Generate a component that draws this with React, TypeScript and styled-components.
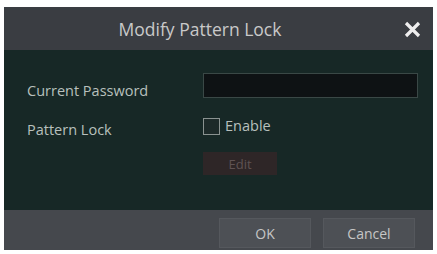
import React from "react";
import styled, { createGlobalStyle } from "styled-components";

const GlobalStyle = createGlobalStyle`
  html, body {
    margin: 0;
    padding: 0;
    background: #ffffff;
  }
  body {
    font-family: "Open Sans", "DejaVu Sans", sans-serif;
  }
`;

const Dialog = styled.div`
  margin: 7px 0 0 4px;
  width: 429px;
  height: 243px;
  display: flex;
  flex-direction: column;
  background: #172826;
`;

const TitleBar = styled.div`
  height: 43px;
  flex: none;
  display: flex;
  align-items: center;
  justify-content: center;
  position: relative;
  background: #3a3d42;
`;

const Title = styled.div`
  font-size: 17.5px;
  color: #c9c9c9;
  margin-left: -37px;
`;

const CloseButton = styled.button`
  position: absolute;
  right: 12px;
  top: 13px;
  width: 18px;
  height: 18px;
  padding: 0;
  border: none;
  background: transparent;
  display: flex;
  align-items: center;
  justify-content: center;
`;

const Body = styled.div`
  flex: 1;
  display: grid;
  grid-template-columns: 176px 215px;
  grid-auto-rows: min-content;
  align-items: start;
  padding: 23px 0 0 23px;
  background: #172826;
`;

const Label = styled.div<{ $top: number }>`
  font-size: 14.5px;
  line-height: 20px;
  color: #b8c0bd;
  margin-top: ${(p) => p.$top}px;
`;

const Cell = styled.div<{ $top: number }>`
  margin-top: ${(p) => p.$top}px;
  display: flex;
  align-items: center;
`;

const PasswordInput = styled.div`
  width: 215px;
  height: 25px;
  box-sizing: border-box;
  background: #0e1214;
  border: 1px solid #3a4846;
`;

const CheckRow = styled.label`
  display: flex;
  align-items: center;
  gap: 5px;
  font-size: 14.5px;
  line-height: 20px;
  color: #b8c0bd;
`;

const CheckBox = styled.span`
  width: 17px;
  height: 17px;
  box-sizing: border-box;
  border: 1px solid #8a9290;
  background: #1d2a29;
`;

const EditButton = styled.div`
  width: 74px;
  height: 23px;
  display: flex;
  align-items: center;
  justify-content: center;
  font-size: 13px;
  color: #5f5353;
  background: #2e2627;
`;

const Footer = styled.div`
  height: 40px;
  flex: none;
  display: flex;
  justify-content: flex-end;
  align-items: flex-end;
  gap: 12px;
  padding: 0 18px 2px 0;
  box-sizing: border-box;
  background: #45484d;
`;

const FooterButton = styled.div`
  width: 92px;
  height: 30px;
  display: flex;
  align-items: center;
  justify-content: center;
  font-size: 14px;
  color: #c6c6c6;
  background: #4d5055;
  border: 1px solid #55585d;
  box-sizing: border-box;
`;

export default function App() {
  return (
    <>
      <GlobalStyle />
      <Dialog>
        <TitleBar>
          <Title>Modify Pattern Lock</Title>
          <CloseButton aria-label="Close">
            <svg width="17" height="17" viewBox="0 0 17 17">
              <path
                d="M2 2 L15 15 M15 2 L2 15"
                stroke="#eeeeee"
                strokeWidth="3.2"
                strokeLinecap="butt"
              />
            </svg>
          </CloseButton>
        </TitleBar>
        <Body>
          <Label $top={8}>Current Password</Label>
          <Cell $top={0}>
            <PasswordInput />
          </Cell>
          <Label $top={19}>Pattern Lock</Label>
          <Cell $top={15}>
            <CheckRow>
              <CheckBox />
              Enable
            </CheckRow>
          </Cell>
          <div />
          <Cell $top={12}>
            <EditButton>Edit</EditButton>
          </Cell>
        </Body>
        <Footer>
          <FooterButton>OK</FooterButton>
          <FooterButton>Cancel</FooterButton>
        </Footer>
      </Dialog>
    </>
  );
}
